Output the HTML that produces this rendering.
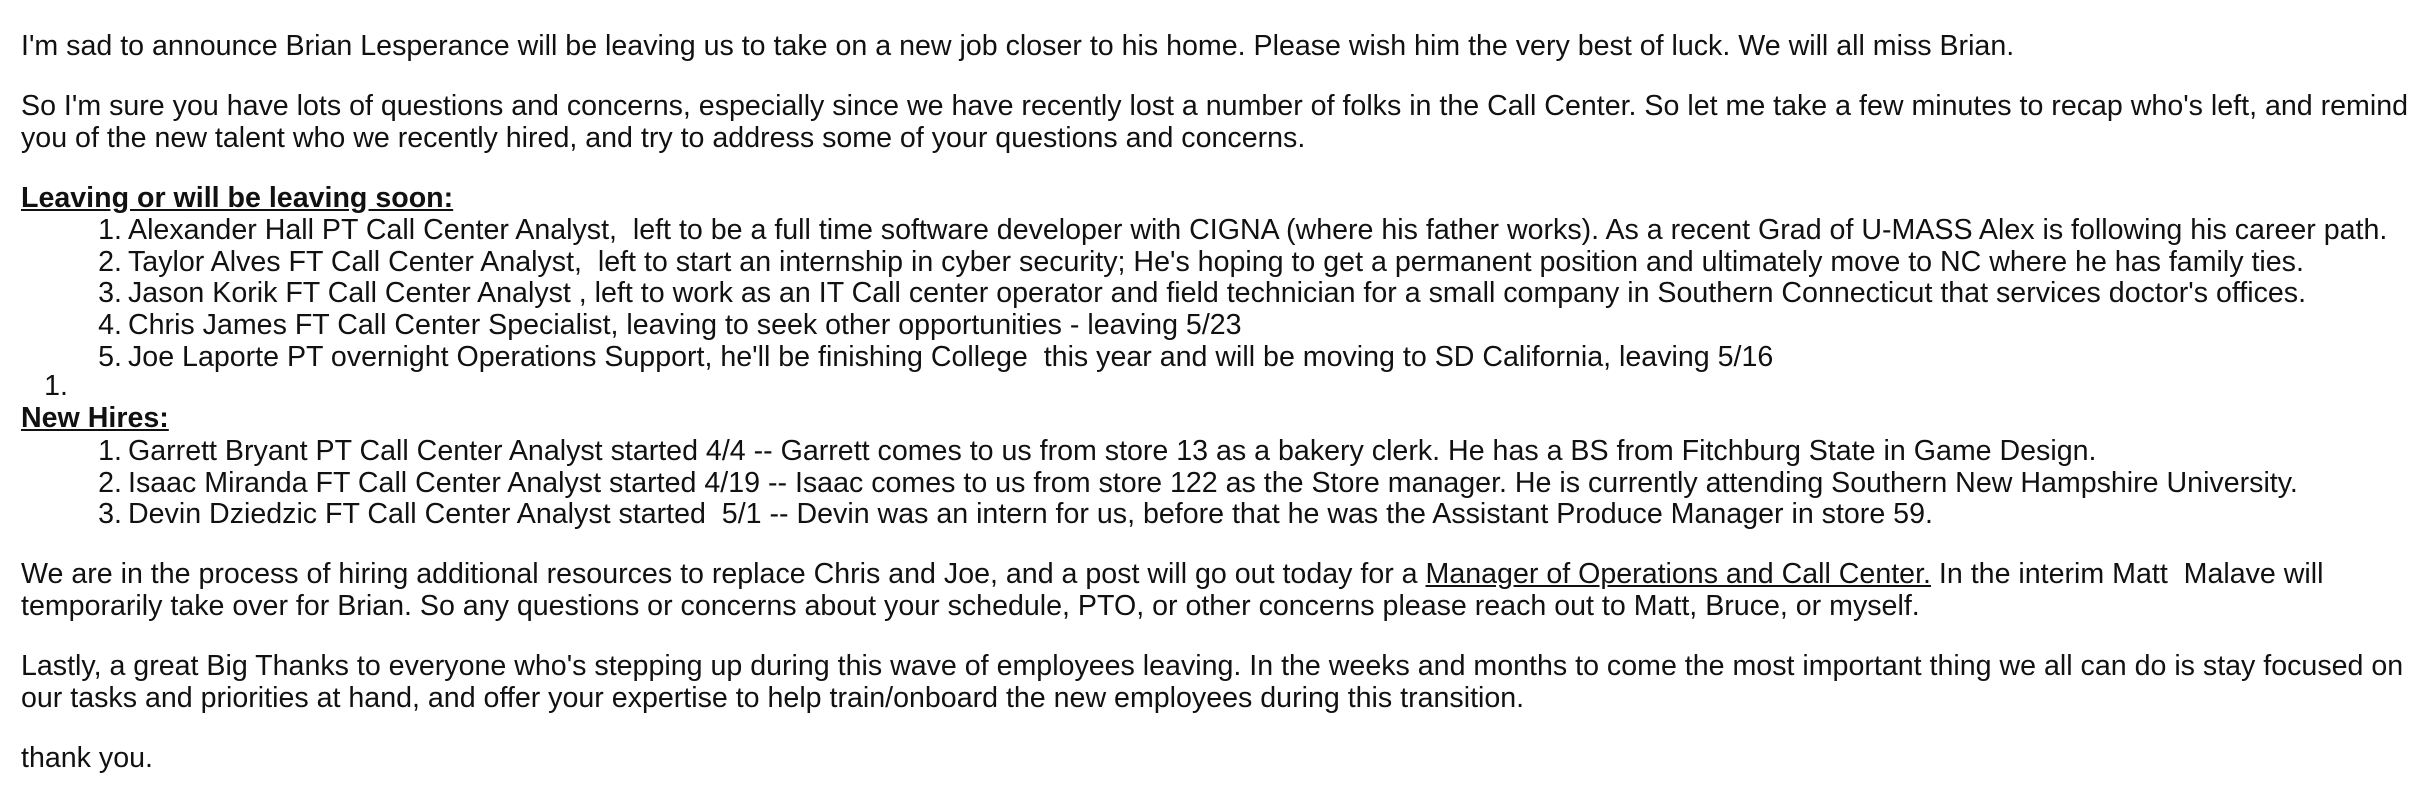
<!DOCTYPE html>
<html><head><meta charset="utf-8"><style>
html,body{margin:0;padding:0;background:#fff;width:2428px;height:794px;overflow:hidden}
body{font-family:"Liberation Sans",Arial,sans-serif;font-size:28.6px;color:#111;position:relative}
.l{position:absolute;white-space:pre;line-height:32px;height:32px}
.n{position:absolute;white-space:pre;line-height:32px;text-align:right;width:60px}
b{font-weight:bold;text-decoration:underline}
u{text-decoration:underline}
</style></head><body>
<div class="l" style="left:21px;top:30px">I'm sad to announce Brian Lesperance will be leaving us to take on a new job closer to his home. Please wish him the very best of luck. We will all miss Brian.</div>
<div class="l" style="left:21px;top:90px">So I'm sure you have lots of questions and concerns, especially since we have recently lost a number of folks in the Call Center. So let me take a few minutes to recap who's left, and remind</div>
<div class="l" style="left:21px;top:122px">you of the new talent who we recently hired, and try to address some of your questions and concerns.</div>
<div class="l" style="left:21px;top:182px"><b>Leaving or will be leaving soon:</b></div>

<div class="n" style="left:62px;top:214px">1.</div><div class="l" style="left:128px;top:214px">Alexander Hall PT Call Center Analyst,  left to be a full time software developer with CIGNA (where his father works). As a recent Grad of U-MASS Alex is following his career path.</div>
<div class="n" style="left:62px;top:246px">2.</div><div class="l" style="left:128px;top:246px">Taylor Alves FT Call Center Analyst,  left to start an internship in cyber security; He's hoping to get a permanent position and ultimately move to NC where he has family ties.</div>
<div class="n" style="left:62px;top:277px">3.</div><div class="l" style="left:128px;top:277px">Jason Korik FT Call Center Analyst , left to work as an IT Call center operator and field technician for a small company in Southern Connecticut that services doctor's offices.</div>
<div class="n" style="left:62px;top:309px">4.</div><div class="l" style="left:128px;top:309px">Chris James FT Call Center Specialist, leaving to seek other opportunities - leaving 5/23</div>
<div class="n" style="left:62px;top:341px">5.</div><div class="l" style="left:128px;top:341px">Joe Laporte PT overnight Operations Support, he'll be finishing College  this year and will be moving to SD California, leaving 5/16</div>
<div class="n" style="left:8px;top:370px">1.</div>
<div class="l" style="left:21px;top:402px"><b>New Hires:</b></div>
<div class="n" style="left:62px;top:435px">1.</div><div class="l" style="left:128px;top:435px">Garrett Bryant PT Call Center Analyst started 4/4 -- Garrett comes to us from store 13 as a bakery clerk. He has a BS from Fitchburg State in Game Design.</div>
<div class="n" style="left:62px;top:467px">2.</div><div class="l" style="left:128px;top:467px">Isaac Miranda FT Call Center Analyst started 4/19 -- Isaac comes to us from store 122 as the Store manager. He is currently attending Southern New Hampshire University.</div>
<div class="n" style="left:62px;top:498px">3.</div><div class="l" style="left:128px;top:498px">Devin Dziedzic FT Call Center Analyst started  5/1 -- Devin was an intern for us, before that he was the Assistant Produce Manager in store 59.</div>

<div class="l" style="left:21px;top:558px">We are in the process of hiring additional resources to replace Chris and Joe, and a post will go out today for a <u>Manager of Operations and Call Center.</u> In the interim Matt  Malave will</div>
<div class="l" style="left:21px;top:590px">temporarily take over for Brian. So any questions or concerns about your schedule, PTO, or other concerns please reach out to Matt, Bruce, or myself.</div>
<div class="l" style="left:21px;top:650px">Lastly, a great Big Thanks to everyone who's stepping up during this wave of employees leaving. In the weeks and months to come the most important thing we all can do is stay focused on</div>
<div class="l" style="left:21px;top:682px">our tasks and priorities at hand, and offer your expertise to help train/onboard the new employees during this transition.</div>
<div class="l" style="left:21px;top:742px">thank you.</div>
</body></html>
